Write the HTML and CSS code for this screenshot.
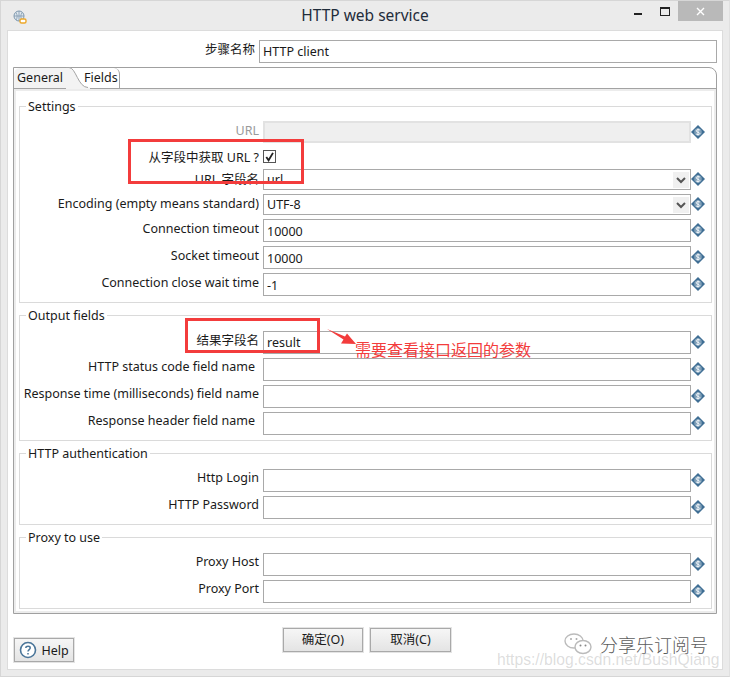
FILE: index.html
```html
<!DOCTYPE html>
<html lang="zh">
<head>
<meta charset="utf-8">
<title>HTTP web service</title>
<link rel="stylesheet" href="styles.css">
</head>
<body>
<svg class="defs" width="0" height="0" aria-hidden="true">
  <symbol id="var" viewBox="0 0 14 14">
    <path d="M7 0 14 7 7 14 0 7Z" fill="#3f6e94"/>
    <circle cx="7" cy="7" r="3.800" fill="#7f9fb8"/>
    <path d="M9 5.200C8.400 4.400 5.200 4.200 5.200 5.800S8.900 7.400 8.900 8.600 5.600 9.900 5 8.800M7 3.400V10.600" fill="none" stroke="#eef3f7" stroke-width="1"/>
  </symbol>
  <symbol id="chev" viewBox="0 0 16 16">
    <rect width="16" height="16" fill="#f0f0f0"/>
    <path d="M4 6 8 10 12 6" fill="none" stroke="#555" stroke-width="2"/>
  </symbol>
</svg>
<div class="window">
  <header class="titlebar">
    <svg class="appicon" width="14" height="14" viewBox="0 0 14 14">
      <circle cx="6" cy="6" r="5" fill="#dfe7ee" stroke="#7f98ad"/>
      <path d="M1 6H11M6 1V11M3 2.500C4.500 5 4.500 8 3 10M9 2.500C7.500 5 7.500 8 9 10" fill="none" stroke="#7f98ad" stroke-width=".8"/>
      <rect x="7" y="9" width="6" height="4" rx="1.500" fill="#fff" stroke="#eda82a" stroke-width="1.400"/>
    </svg>
    <h1 class="title">HTTP web service</h1>
    <div class="controls">
      <span class="min"></span>
      <span class="max"></span>
      <span class="close">
        <svg width="9" height="9" viewBox="0 0 9 9"><path d="M1 1 8 8M8 1 1 8" stroke="#fff" stroke-width="1.400"/></svg>
      </span>
    </div>
  </header>

  <main class="content">
    <div class="stepname">
      <label class="steplabel">步骤名称</label>
      <div class="field stepinput">HTTP client</div>
    </div>

    <section class="folder">
      <div class="tabs">
        <span class="tab tab-active">General</span>
        <span class="tab tab-fields">Fields</span>
        <svg class="tabcurve" width="24" height="22" viewBox="0 0 24 22"><path d="M0 0.500H3C10 .5 12 20 22 20.500H24V22H0Z" fill="#f3f3f3"/><path d="M0 .5H3C10 .5 12 20.500 22 20.500" fill="none" stroke="#a3a3a3"/></svg>
      </div>
      <div class="pane">
        <fieldset class="group group-settings">
          <legend>Settings</legend>
          <div class="row r22 mb2"><label class="disabled">URL</label><div class="field off"></div><svg class="var"><use href="#var"/></svg></div>
          <div class="row r22 mb2 check"><label>从字段中获取 URL ?</label><span class="checkbox"><svg width="12" height="12" viewBox="0 0 12 12"><path d="M2.500 6 5 9.500 9.800 1.500" fill="none" stroke="#222" stroke-width="2"/></svg></span></div>
          <div class="row r21 mb4 urlfield"><label>URL 字段名</label><div class="field select">url<svg class="chev"><use href="#chev"/></svg></div><svg class="var v21"><use href="#var"/></svg></div>
          <div class="row r21 mb4"><label>Encoding (empty means standard)</label><div class="field select">UTF-8<svg class="chev"><use href="#chev"/></svg></div><svg class="var v21"><use href="#var"/></svg></div>
          <div class="row r23 mb4"><label>Connection timeout</label><div class="field">10000</div><svg class="var"><use href="#var"/></svg></div>
          <div class="row r23 mb4"><label>Socket timeout</label><div class="field">10000</div><svg class="var"><use href="#var"/></svg></div>
          <div class="row r23"><label>Connection close wait time</label><div class="field">-1</div><svg class="var"><use href="#var"/></svg></div>
        </fieldset>

        <fieldset class="group group-output">
          <legend>Output fields</legend>
          <div class="row r23 mb4"><label>结果字段名</label><div class="field result">result</div><svg class="var"><use href="#var"/></svg></div>
          <div class="row r23 mb4"><label class="short tight">HTTP status code field name</label><div class="field"></div><svg class="var"><use href="#var"/></svg></div>
          <div class="row r23 mb4"><label class="tight">Response time (milliseconds) field name</label><div class="field"></div><svg class="var"><use href="#var"/></svg></div>
          <div class="row r23"><label class="short tight">Response header field name</label><div class="field"></div><svg class="var"><use href="#var"/></svg></div>
        </fieldset>

        <fieldset class="group group-auth">
          <legend>HTTP authentication</legend>
          <div class="row r23 mb4"><label class="tight">Http Login</label><div class="field"></div><svg class="var"><use href="#var"/></svg></div>
          <div class="row r23"><label class="tight">HTTP Password</label><div class="field"></div><svg class="var"><use href="#var"/></svg></div>
        </fieldset>

        <fieldset class="group group-proxy">
          <legend>Proxy to use</legend>
          <div class="row r23 mb4"><label class="tight">Proxy Host</label><div class="field"></div><svg class="var"><use href="#var"/></svg></div>
          <div class="row r23"><label class="tight">Proxy Port</label><div class="field"></div><svg class="var"><use href="#var"/></svg></div>
        </fieldset>
      </div>
    </section>

    <footer class="footer">
      <button class="btn help" type="button">
        <svg width="18" height="18" viewBox="0 0 18 18"><circle cx="9" cy="9" r="7.500" fill="#fff" stroke="#4a7599" stroke-width="1.600"/><path d="M6.800 7C7 4.800 11.200 4.800 11.200 7 11.200 8.600 9 8.600 9 10.600M9 12V13.600" fill="none" stroke="#4a7599" stroke-width="1.500"/></svg>
        Help
      </button>
      <button class="btn action ok" type="button">确定(O)</button>
      <button class="btn action cancel" type="button">取消(C)</button>
    </footer>
  </main>

  <!-- annotations pasted over the screenshot -->
  <div class="redbox box1"></div>
  <div class="redbox box2"></div>
  <svg class="arrow" width="32" height="20" viewBox="0 0 32 20"><path d="M0 0 18 7.500 20 4.500 29 15 14 14.500 16.500 10.500Z" fill="#f33c3c"/></svg>
  <div class="note">需要查看接口返回的参数</div>

  <div class="mark">
    <svg width="29" height="22" viewBox="0 0 29 22"><g fill="none" stroke="#bbb" stroke-width="1.400"><ellipse cx="10" cy="8" rx="9" ry="7"/><ellipse cx="19" cy="14" rx="8" ry="6.500" fill="#fff"/></g><circle cx="16.500" cy="12.500" r="1" fill="#888"/><circle cx="21.500" cy="12.500" r="1" fill="#888"/><circle cx="7" cy="6" r="1" fill="#aaa"/><circle cx="12.500" cy="6" r="1" fill="#aaa"/></svg>
    <span class="marktext">分享乐订阅号</span>
  </div>
  <div class="url-mark">https://blog.csdn.net/BushQiang</div>
</div>
</body>
</html>
```
FILE: styles.css
```css
* { box-sizing: border-box; }
html, body { margin: 0; padding: 0; }
body { width: 730px; height: 677px; overflow: hidden; font-family: "Noto Sans", "Noto Sans CJK SC", sans-serif; font-size: 12.5px; color: #1a1a1a; }
.defs { position: absolute; }
.window { position: relative; width: 730px; height: 677px; background: #ebebeb; border: 1px solid #d6d6d6; border-right-color: #e0e0e0; display: flex; flex-direction: column; }

.titlebar { height: 29px; flex: none; display: flex; align-items: flex-start; position: relative; }
.appicon { margin: 9px 0 0 12px; }
.title { position: absolute; left: 0; right: 0; top: 4px; margin: 0; text-align: center; font-size: 15.5px; line-height: 21px; font-weight: 400; color: #1f2c3a; }
.controls { margin-left: auto; margin-right: 6px; display: flex; align-items: flex-start; }
.min { width: 8px; height: 2px; background: #222; margin: 12px 18px 0 0; }
.max { width: 10px; height: 9px; border: 1px solid #222; border-top-width: 2px; margin: 6px 8px 0 0; }
.close { width: 45px; height: 20px; background: #b9b9b9; display: flex; align-items: center; justify-content: center; }

.content { flex: none; margin: 0 6px; width: 716px; height: 640px; background: #fff; border: 1px solid #dcdcdc; padding: 9px 5px 0 5px; }

.stepname { display: flex; height: 23px; }
.steplabel { width: 246px; text-align: right; padding-right: 4px; line-height: 20px; }
.field { height: 100%; flex: none; width: 428px; border: 1px solid #a9a9a9; background: #fff; padding: 0 3px; line-height: 23px; position: relative; white-space: nowrap; }
.stepinput { width: 458px; line-height: 22px; }
.result { line-height: 21px; }

.folder { margin-top: 4px; width: 704px; height: 547px; border: 1px solid #a0a0a0; border-radius: 0 8px 0 0; position: relative; }
.tabs { height: 21px; border-bottom: 1px solid #a3a3a3; display: flex; position: relative; }
.tab { line-height: 20px; height: 20px; }
.tab-active { width: 55px; padding-left: 3px; background: #f3f3f3; border-radius: 6px 0 0 0; }
.tab-fields { margin-left: 14px; width: 37px; padding-left: 1px; border-right: 1px solid #a3a3a3; border-radius: 0 6px 0 0; }
.tabcurve { position: absolute; left: 52px; top: -1px; }
.pane { height: 524px; width: 702px; border: 2px solid #ececec; padding: 0 2px 0 3px; }

.group { margin: 4px 0 0 0; padding: 0; border: 1px solid #dadada; min-width: 0; display: block; }
.group legend { margin-left: 6px; padding: 0 2px; line-height: 18px; height: 16px; }
.group-settings { margin-top: 7px; height: 205px; padding-top: 7px; }
.group-output { height: 134px; padding-top: 8px; }
.group-auth { height: 80px; padding-top: 8px; }
.group-proxy { height: 80px; padding-top: 8px; }

.row { display: flex; align-items: stretch; position: relative; }
.r21 { height: 21px; }
.r22 { height: 22px; }
.r23 { height: 23px; }
.mb2 { margin-bottom: 2px; }
.mb4 { margin-bottom: 4px; }
.row label { width: 243px; flex: none; text-align: right; padding: 1px 4px 0 0; line-height: 17px; white-space: nowrap; }
.row label.tight { padding-top: 0; }
.row label.short { padding-right: 8px; }
.row label.disabled { color: #9a9a9a; }
.row.check label { padding-top: 4px; }
.row.urlfield label { padding-top: 2px; }
.off { background: #efefef; border: 2px solid #e2e2e2; }
.select { line-height: 20px; }
.chev { position: absolute; right: 1px; top: 2px; width: 16px; height: 16px; }
.var { width: 14px; height: 14px; margin-top: 4px; flex: none; }
.v21 { margin-top: 3px; }
.check .checkbox { width: 13px; height: 13px; border: 1px solid #555; background: #fff; margin-top: 5px; display: flex; align-items: center; justify-content: center; }

.footer { display: flex; align-items: flex-start; position: relative; padding-top: 14px; }
.btn { font: inherit; color: #1a1a1a; background: linear-gradient(#f6f6f6, #e4e4e4); border: 1px solid #a9a9a9; outline: 1px solid #e4e4e4; padding: 0; }
.help { width: 60px; height: 24px; margin: 10px 0 0 1px; display: flex; align-items: center; justify-content: center; gap: 4px; }
.action { height: 24px; padding-bottom: 3px; }
.ok { width: 80px; margin-left: 209px; margin-right: 7px; }
.cancel { width: 81px; }

.redbox { position: absolute; border: 3px solid #f33c3c; }
.box1 { left: 127px; top: 138px; width: 176px; height: 45px; }
.box2 { left: 184px; top: 317px; width: 135px; height: 35px; }
.arrow { position: absolute; left: 326px; top: 328px; }
.note { position: absolute; left: 354px; top: 337px; font-size: 16px; line-height: 22px; color: #f33c3c; font-family: "Noto Sans CJK SC", sans-serif; }

.mark { position: absolute; left: 563px; top: 631px; display: flex; align-items: center; gap: 7px; }
.marktext { font-size: 18px; line-height: 24px; color: #5c5c5c; font-family: "Noto Sans CJK SC", sans-serif; font-weight: 300; }
.url-mark { position: absolute; left: 496px; top: 649px; font-family: "Liberation Sans", sans-serif; font-size: 15.7px; line-height: 20px; color: rgba(150,150,150,.32); }
```
